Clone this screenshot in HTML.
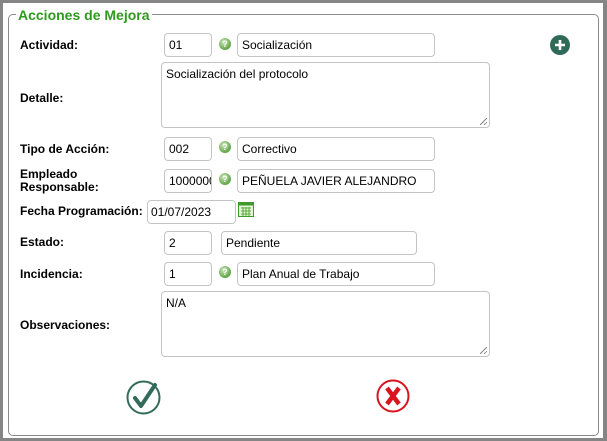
<!DOCTYPE html>
<html><head><meta charset="utf-8"><style>
*{box-sizing:border-box;margin:0;padding:0}
body{width:607px;height:441px;background:#fff;font-family:"Liberation Sans",sans-serif;font-size:12px;color:#000;position:relative;overflow:hidden}
.frame{position:absolute;left:0;top:0;width:607px;height:441px;border:3px solid #858585;border-right-width:4px}
.fs{position:absolute;left:8px;top:14px;width:591px;height:422px;border:1px solid #8a8a8a;border-radius:5px}
.lg{position:absolute;left:16px;top:7px;background:#fff;padding:0 2px;color:#2e9a1e;font-weight:bold;font-size:14px}
.lb{position:absolute;left:20px;font-weight:bold;font-size:12px;line-height:13px}
.in{position:absolute;border:1px solid #c4c4c4;border-radius:4px;height:24px;padding:4px 4px;font-size:12px;line-height:14px;white-space:nowrap;overflow:hidden;background:#fff}
.ta{position:absolute;border:1px solid #c4c4c4;border-radius:4px;padding:4px;font-size:12px;background:#fff}
.ta:after{content:"";position:absolute;right:2px;bottom:2px;width:7px;height:7px;background:linear-gradient(135deg,transparent 45%,#888 45%,#888 55%,transparent 55%,transparent 75%,#888 75%,#888 85%,transparent 85%)}
.q{position:absolute;width:12px;height:12px;border-radius:50%;background:radial-gradient(circle at 40% 35%,#cfe9c0,#6fae55 60%,#3f8a2e);color:#fff;font-size:9px;font-weight:bold;text-align:center;line-height:12px}
</style></head><body>
<div class="frame"></div>
<div class="fs"></div>
<div class="lg">Acciones de Mejora</div>

<div class="lb" style="top:39px">Actividad:</div>
<div class="in" style="left:164px;top:33px;width:48px">01</div>
<div class="q" style="left:219px;top:38px">?</div>
<div class="in" style="left:237px;top:33px;width:198px">Socialización</div>
<svg style="position:absolute;left:549px;top:34px" width="22" height="22"><circle cx="11" cy="11" r="10" fill="#2f6b58"/><path d="M11 6v10M6 11h10" stroke="#fff" stroke-width="2.6"/></svg>

<div class="lb" style="top:92px">Detalle:</div>
<div class="ta" style="left:161px;top:62px;width:329px;height:66px">Socialización del protocolo</div>

<div class="lb" style="top:143px">Tipo de Acción:</div>
<div class="in" style="left:164px;top:137px;width:48px">002</div>
<div class="q" style="left:219px;top:141px">?</div>
<div class="in" style="left:237px;top:137px;width:198px">Correctivo</div>

<div class="lb" style="top:168px">Empleado<br>Responsable:</div>
<div class="in" style="left:164px;top:169px;width:48px;padding-right:0">1000000</div>
<div class="q" style="left:219px;top:173px">?</div>
<div class="in" style="left:237px;top:169px;width:198px">PEÑUELA JAVIER ALEJANDRO</div>

<div class="lb" style="top:205px">Fecha Programación:</div>
<div class="in" style="left:147px;top:200px;width:89px;padding-left:3px">01/07/2023</div>
<svg style="position:absolute;left:238px;top:202px" width="16" height="15"><rect x="0.5" y="0.5" width="15" height="14" fill="#e8f4df" stroke="#3f9a2c"/><rect x="0.5" y="0.5" width="15" height="3" fill="#3f9a2c"/><path d="M3 6h10M3 9h10M3 12h10M5 5v9M8 5v9M11 5v9" stroke="#5aaa3c" stroke-width="1"/></svg>

<div class="lb" style="top:236px">Estado:</div>
<div class="in" style="left:164px;top:231px;width:48px">2</div>
<div class="in" style="left:221px;top:231px;width:196px">Pendiente</div>

<div class="lb" style="top:268px">Incidencia:</div>
<div class="in" style="left:164px;top:262px;width:48px">1</div>
<div class="q" style="left:219px;top:266px">?</div>
<div class="in" style="left:237px;top:262px;width:198px">Plan Anual de Trabajo</div>

<div class="lb" style="top:319px">Observaciones:</div>
<div class="ta" style="left:161px;top:291px;width:329px;height:66px">N/A</div>

<svg style="position:absolute;left:126px;top:379px" width="36" height="36"><circle cx="17.5" cy="18.5" r="16" fill="none" stroke="#336b5a" stroke-width="2"/><path d="M9 19l6 8L29 6" fill="none" stroke="#336b5a" stroke-width="4" stroke-linecap="round" stroke-linejoin="round"/></svg>
<svg style="position:absolute;left:376px;top:379px" width="34" height="34"><circle cx="17" cy="17" r="15.5" fill="none" stroke="#d8141e" stroke-width="2"/><path d="M11 9l12 16M23 9L11 25" stroke="#d8141e" stroke-width="4.5"/></svg>
</body></html>
